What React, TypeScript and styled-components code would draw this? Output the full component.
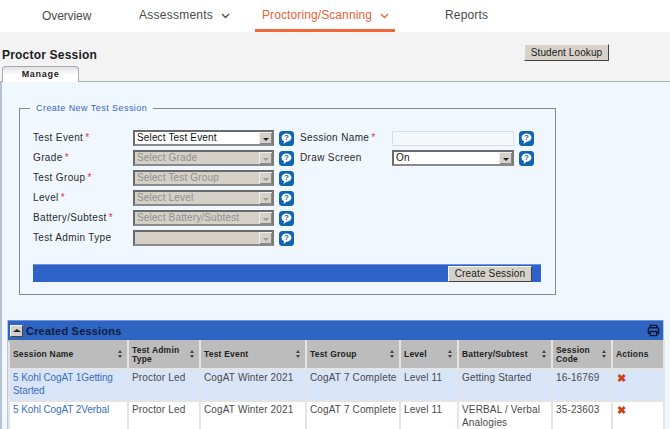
import React from "react";
import styled, { createGlobalStyle } from "styled-components";

const Global = createGlobalStyle`
  html, body { margin: 0; padding: 0; height: 429px; overflow: hidden; background: #f0f7ff; }
  body { font-family: "Liberation Sans", Arial, sans-serif; color: #222; }
  * { box-sizing: border-box; }
`;

const Page = styled.div`
  width: 670px;
  height: 429px;
  overflow: hidden;
`;
const Nav = styled.nav`
  height: 32px;
  background: #fff;
  display: flex;
`;
const NavItem = styled.div<{ $w: number; $active?: boolean; $pad: number; $ls: number; $top?: number }>`
  width: ${(p) => p.$w}px;
  padding-left: ${(p) => p.$pad}px;
  height: 32px;
  padding-top: ${(p) => p.$top ?? 8}px;
  font-size: 12px;
  line-height: 15px;
  letter-spacing: ${(p) => p.$ls}px;
  display: flex;
  gap: 8px;
  color: ${(p) => (p.$active ? "#e8623a" : "#4a4a4a")};
  border-bottom: ${(p) => (p.$active ? "3px solid #f0683a" : "none")};
`;
const Chevron = styled.svg`
  width: 9px;
  height: 6px;
  margin-top: 5px;
`;
const Header = styled.div`
  height: 50px;
  background: #f3f3f3;
  border-bottom: 1px solid #aab0b4;
  display: flex;
  flex-direction: column;
  justify-content: flex-end;
`;
const TitleRow = styled.div`
  display: flex;
  justify-content: space-between;
  padding: 0 61px 0 2px;
  height: 23px;
  align-items: flex-start;
`;
const Title = styled.h1`
  margin: 17px 0 0;
  font-size: 12px;
  line-height: 14px;
  font-weight: 700;
  color: #1c1c1c;
  letter-spacing: 0.2px;
`;
const Lookup = styled.button`
  width: 85px;
  height: 17px;
  padding: 0;
  background: #d6d2ca;
  border: 1px solid;
  border-color: #f4f3f0 #404040 #404040 #f4f3f0;
  font: 10px "Liberation Sans", Arial, sans-serif;
  color: #1a1a1a;
  margin-top: 13px;
  letter-spacing: 0.1px;
`;
const TabBar = styled.div`
  padding-left: 2px;
  height: 15px;
  margin-top: 12px;
`;
const Tab = styled.div`
  width: 77px;
  height: 16px;
  background: linear-gradient(#e2e2e2, #fff 55%);
  border: 1px solid #a4aaae;
  border-bottom: none;
  border-radius: 4px 4px 0 0;
  text-align: center;
  font-size: 9px;
  line-height: 14px;
  font-weight: 700;
  color: #222;
  letter-spacing: 0.7px;
`;
const Main = styled.main`
  border-left: 2px solid #b4c4d6;
  padding: 21px 0 0 17px;
  height: 347px;
`;
const Field = styled.fieldset`
  width: 537px;
  height: 192px;
  margin: 0;
  padding: 14px 13px 0 13px;
  border: 1px solid #8a8a8a;
`;
const Legend = styled.legend`
  margin-left: -3px;
  padding: 0 6px;
  color: #3b66c0;
  font-size: 9px;
  line-height: 11px;
  letter-spacing: 0.45px;
`;
const FormGrid = styled.div`
  display: flex;
  height: 121px;
`;
const LeftCol = styled.div`
  width: 267px;
  display: flex;
  flex-direction: column;
`;
const RightCol = styled.div`
  display: flex;
  flex-direction: column;
`;
const Row = styled.div`
  height: 20px;
  display: flex;
  align-items: center;
`;
const Label = styled.label<{ $w: number }>`
  width: ${(p) => p.$w}px;
  font-size: 10px;
  line-height: 12px;
  letter-spacing: 0.35px;
  color: #2a2a2a;
`;
const Req = styled.span`
  color: #e03a3a;
  margin-left: -1px;
`;
const Select = styled.div<{ $disabled?: boolean; $w: number }>`
  width: ${(p) => p.$w}px;
  height: 16px;
  border: 2px solid;
  border-color: #6a6a6a #7a7a7a #8a8a8a #6a6a6a;
  background: ${(p) => (p.$disabled ? "#d4d0c8" : "#fff")};
  color: ${(p) => (p.$disabled ? "#8f8f8f" : "#111")};
  font-size: 10px;
  line-height: 12px;
  letter-spacing: 0.15px;
  padding-left: 2px;
  display: flex;
  align-items: center;
`;
const Arrow = styled.span<{ $disabled?: boolean }>`
  width: 13px;
  height: 12px;
  margin-left: auto;
  background: #d4d0c8;
  border-left: 1px solid #eee;
  border-top: 1px solid #eee;
  box-shadow: inset -1px -1px 0 #888;
  display: flex;
  align-items: center;
  justify-content: center;
  &::after {
    content: "";
    border: 3px solid transparent;
    border-bottom: none;
    border-top: 3px solid ${(p) => (p.$disabled ? "#999" : "#222")};
    margin-top: 2px;
  }
`;
const Help = styled.svg`
  width: 15px;
  height: 15px;
  margin-left: 5px;
  flex: none;
`;
const TextInput = styled.input`
  width: 122px;
  height: 15px;
  padding: 0;
  background: #f4f8fd;
  border: 1px solid #d8dde2;
  border-radius: 1px;
`;
const ActionBar = styled.div`
  width: 508px;
  height: 18px;
  margin-top: 15px;
  background: #2f62c8;
  border-top: 1px solid #6f94dc;
  padding-right: 9px;
  display: flex;
  justify-content: flex-end;
  align-items: center;
`;
const Create = styled.button`
  width: 84px;
  height: 16px;
  padding: 0;
  background: #d6d2ca;
  border: 1px solid;
  border-color: #f4f3f0 #404040 #404040 #f4f3f0;
  font: 10px "Liberation Sans", Arial, sans-serif;
  color: #1a1a1a;
  letter-spacing: 0.15px;
`;
const Sessions = styled.section`
  width: 657px;
  margin: 25px 0 0 -12px;
  border: 1px solid #b8c8e4;
  border-top: none;
`;
const SessionsHead = styled.div`
  height: 20px;
  background: #2e64c2;
  border-top: 1px solid #6f94dc;
  display: flex;
  align-items: center;
  padding: 0 3px 0 2px;
  font-size: 11px;
  font-weight: 700;
  color: #10203c;
  letter-spacing: 0.2px;
  gap: 3px;
`;
const Collapse = styled.span`
  width: 13px;
  height: 12px;
  background: #d4d0c8;
  border: 1px solid;
  border-color: #eee #444 #444 #eee;
  display: flex;
  align-items: center;
  justify-content: center;
  &::after {
    content: "";
    border: 4px solid transparent;
    border-top: none;
    border-bottom: 3px solid #222;
  }
`;
const Printer = styled.svg`
  width: 13px;
  height: 13px;
  margin-left: auto;
`;
const Table = styled.table`
  width: 655px;
  border-collapse: collapse;
  table-layout: fixed;
`;
const Th = styled.th`
  background: #bcbcbc;
  border: 2px solid #e4e4e4;
  border-top-color: #bcbcbc;
  height: 28px;
  padding: 0 3px;
  font-size: 8.5px;
  line-height: 9.5px;
  letter-spacing: 0.2px;
  text-align: left;
  color: #222;
  position: relative;
  vertical-align: middle;
`;
const Sort = styled.span`
  position: absolute;
  right: 4px;
  top: 50%;
  margin-top: -4px;
  width: 5px;
  height: 8px;
  &::before,
  &::after {
    content: "";
    position: absolute;
    left: 0;
    border: 2.5px solid transparent;
  }
  &::before {
    top: -1px;
    border-bottom: 3px solid #444;
    border-top: none;
  }
  &::after {
    top: 4px;
    border-top: 3px solid #444;
    border-bottom: none;
  }
`;
const Tr = styled.tr<{ $alt?: boolean }>`
  background: ${(p) => (p.$alt ? "#d8e4f8" : "#fff")};
`;
const Td = styled.td`
  border: 2px solid #e4e4e4;
  padding: 2px 2px 2px 3px;
  height: 32px;
  vertical-align: top;
  font-size: 10px;
  line-height: 12.5px;
  letter-spacing: 0.15px;
  color: #4a4a4a;
`;
const SessionLink = styled.a`
  color: #3b6fb8;
  letter-spacing: -0.1px;
`;
const Cross = styled.span`
  color: #c8441a;
  font-size: 11px;
  line-height: 12px;
  font-weight: 700;
  padding-left: 1px;
`;

const HelpIcon = () => (
  <Help viewBox="0 0 15 15">
    <rect width="15" height="15" rx="3.5" fill="#0f64b4" />
    <path d="M7.5 2.4c-3 0-5 1.7-5 4.2 0 1.7.9 3 2.5 3.7L4.6 13l3-2.3c2.9-.1 4.9-1.8 4.9-4.1 0-2.5-2-4.2-5-4.2z" fill="#fff" />
    <text x="7.5" y="9.4" fontSize="8" fontWeight="700" textAnchor="middle" fill="#0f64b4" fontFamily="Liberation Sans">?</text>
  </Help>
);

const left = [
  { label: "Test Event", req: true, value: "Select Test Event" },
  { label: "Grade", req: true, value: "Select Grade", disabled: true },
  { label: "Test Group", req: true, value: "Select Test Group", disabled: true },
  { label: "Level", req: true, value: "Select Level", disabled: true },
  { label: "Battery/Subtest", req: true, value: "Select Battery/Subtest", disabled: true },
  { label: "Test Admin Type", req: false, value: "", disabled: true },
];

const columns: { name: React.ReactNode; w: number; sort: boolean }[] = [
  { name: "Session Name", w: 119, sort: true },
  { name: <>Test Admin<br />Type</>, w: 72, sort: true },
  { name: "Test Event", w: 106, sort: true },
  { name: "Test Group", w: 94, sort: true },
  { name: "Level", w: 58, sort: true },
  { name: "Battery/Subtest", w: 94, sort: true },
  { name: <>Session<br />Code</>, w: 60, sort: true },
  { name: "Actions", w: 52, sort: false },
];

const rows = [
  { name: "5 Kohl CogAT 1Getting Started", sub: "Getting Started", code: "16-16769", alt: true },
  { name: "5 Kohl CogAT 2Verbal", sub: "VERBAL / Verbal Analogies", code: "35-23603", alt: false },
];

const Down = ({ color }: { color: string }) => (
  <Chevron viewBox="0 0 9 6">
    <path d="M1 1l3.5 3.5L8 1" fill="none" stroke={color} strokeWidth="1.3" />
  </Chevron>
);

export default function App() {
  return (
    <Page>
      <Global />
      <Nav>
        <NavItem $w={139} $pad={42} $ls={-0.1} $top={9}>Overview</NavItem>
        <NavItem $w={116} $pad={0} $ls={0.25}>Assessments <Down color="#4a4a4a" /></NavItem>
        <NavItem $w={140} $pad={7} $ls={0.1} $active>Proctoring/Scanning <Down color="#e8623a" /></NavItem>
        <NavItem $w={100} $pad={50} $ls={0.15}>Reports</NavItem>
      </Nav>
      <Header>
        <TitleRow>
          <Title>Proctor Session</Title>
          <Lookup>Student Lookup</Lookup>
        </TitleRow>
        <TabBar>
          <Tab>Manage</Tab>
        </TabBar>
      </Header>
      <Main>
        <Field>
          <Legend>Create New Test Session</Legend>
          <FormGrid>
            <LeftCol>
              {left.map((r) => (
                <Row key={r.label}>
                  <Label $w={100}>
                    {r.label} {r.req && <Req>*</Req>}
                  </Label>
                  <Select $w={141} $disabled={r.disabled}>
                    {r.value}
                    <Arrow $disabled={r.disabled} />
                  </Select>
                  <HelpIcon />
                </Row>
              ))}
            </LeftCol>
            <RightCol>
              <Row>
                <Label $w={92}>Session Name <Req>*</Req></Label>
                <TextInput />
                <HelpIcon />
              </Row>
              <Row>
                <Label $w={92}>Draw Screen</Label>
                <Select $w={122}>
                  On
                  <Arrow />
                </Select>
                <HelpIcon />
              </Row>
            </RightCol>
          </FormGrid>
          <ActionBar>
            <Create>Create Session</Create>
          </ActionBar>
        </Field>
        <Sessions>
          <SessionsHead>
            <Collapse />
            Created Sessions
            <Printer viewBox="0 0 14 14">
              <path d="M3.5 4V1.5h7V4M3.5 10H1.5V5a1 1 0 0 1 1-1h9a1 1 0 0 1 1 1v5h-2M3.5 8h7v4.5h-7z" fill="none" stroke="#0c1830" strokeWidth="1.5" />
            </Printer>
          </SessionsHead>
          <Table>
            <colgroup>
              {columns.map((c, i) => (
                <col key={i} width={c.w} />
              ))}
            </colgroup>
            <thead>
              <tr>
                {columns.map((c, i) => (
                  <Th key={i}>
                    {c.name}
                    {c.sort && <Sort />}
                  </Th>
                ))}
              </tr>
            </thead>
            <tbody>
              {rows.map((r) => (
                <Tr key={r.code} $alt={r.alt}>
                  <Td><SessionLink>{r.name}</SessionLink></Td>
                  <Td>Proctor Led</Td>
                  <Td>CogAT Winter 2021</Td>
                  <Td>CogAT 7 Complete</Td>
                  <Td>Level 11</Td>
                  <Td>{r.sub}</Td>
                  <Td>{r.code}</Td>
                  <Td><Cross>✖</Cross></Td>
                </Tr>
              ))}
            </tbody>
          </Table>
        </Sessions>
      </Main>
    </Page>
  );
}
